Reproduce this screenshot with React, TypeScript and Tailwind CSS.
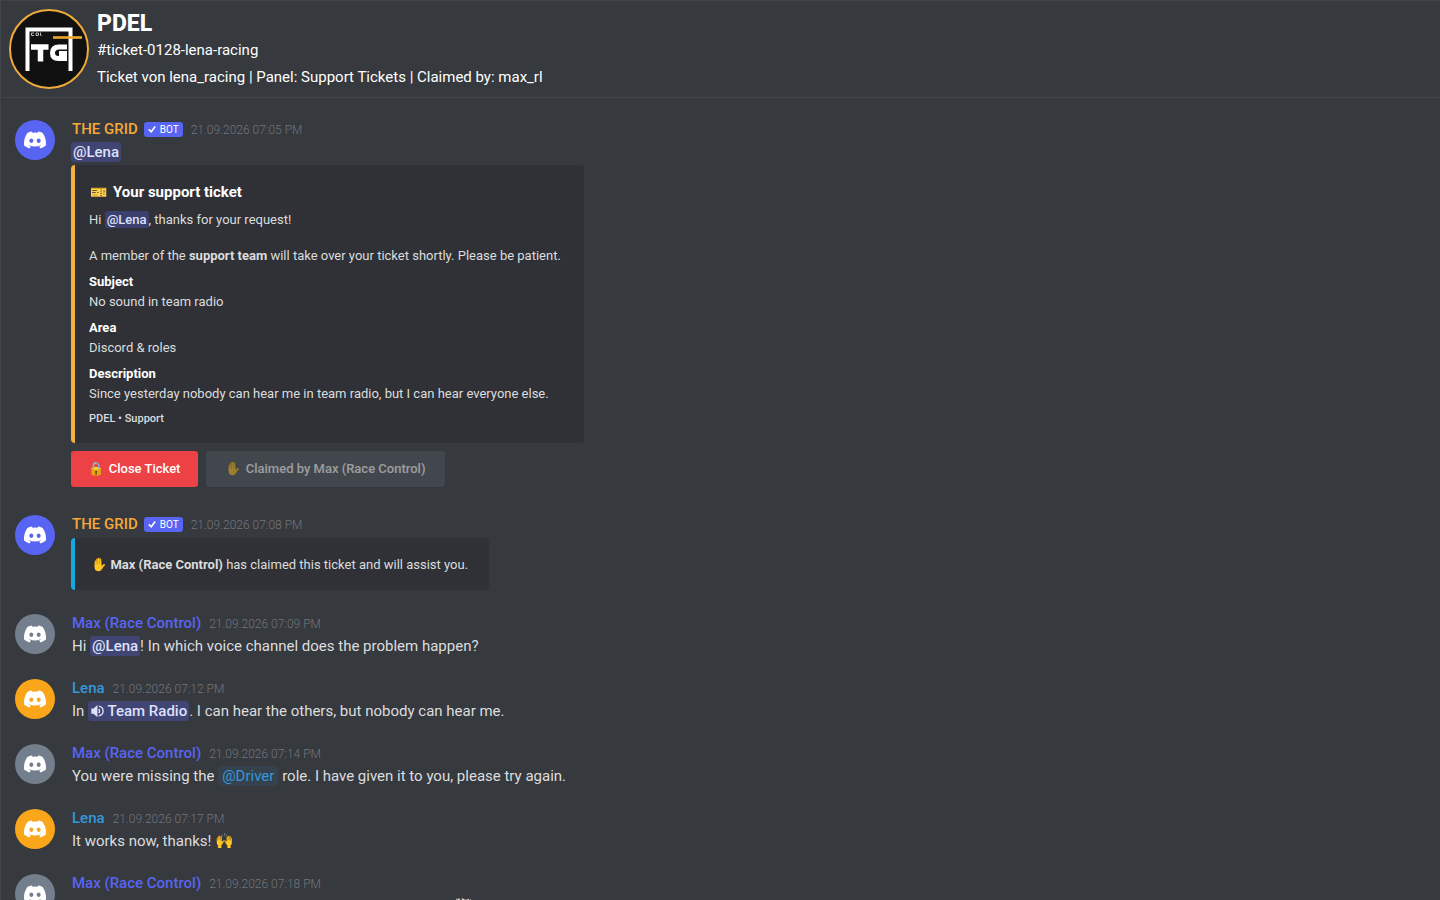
import React from "react";
import { FaDiscord } from "react-icons/fa";

type Author = {
  name: string;
  nameColor: string;
  avatarColor: string;
  bot?: boolean;
};

const grid: Author = {
  name: "THE GRID",
  nameColor: "text-[#f6a83b]",
  avatarColor: "bg-[#5865f2]",
  bot: true,
};

const max: Author = {
  name: "Max (Race Control)",
  nameColor: "text-[#5865f2]",
  avatarColor: "bg-[#747f8d]",
};

const lena: Author = {
  name: "Lena",
  nameColor: "text-[#3498db]",
  avatarColor: "bg-[#faa61a]",
};

const fields = [
  { name: "Subject", value: "No sound in team radio" },
  { name: "Area", value: "Discord & roles" },
  {
    name: "Description",
    value:
      "Since yesterday nobody can hear me in team radio, but I can hear everyone else.",
  },
];

function GuildLogo() {
  return (
    <svg viewBox="0 0 80 80" className="w-20 h-20 shrink-0" aria-label="PDEL">
      <circle cx="40" cy="40" r="39" fill="#111111" stroke="#f0ab3a" strokeWidth="2" />
      <path d="M18.5 62V20.5H61.5V62" fill="none" stroke="#fff" strokeWidth="4" />
      <path d="M44 28.5H73" stroke="#f0a92f" strokeWidth="2.6" />
      <path
        d="M25 24h-2.500v2.500h2.500M27 24h2.500v2.500H27zM31.500 23.500v3h1"
        fill="none"
        stroke="#ccc"
        strokeWidth="0.9"
      />
      {/* monogram */}
      <path d="M22 38H39.500M31.500 38V52.500" stroke="#fff" strokeWidth="5.500" fill="none" />
      <path
        d="M58 38H50Q43.500 38 43.500 44Q43.500 49.500 49.500 49.500H55.500V44.500H50"
        fill="none"
        stroke="#fff"
        strokeWidth="5"
      />
    </svg>
  );
}

function Mention({ children }: { children: React.ReactNode }) {
  return (
    <span className="bg-[#5865f2]/30 text-[#dee0fc] font-medium rounded-[3px] px-0.5 py-px">
      {children}
    </span>
  );
}

function Message({
  author,
  time,
  children,
}: {
  author: Author;
  time: string;
  children: React.ReactNode;
}) {
  return (
    <article className="flex items-start gap-4">
      <div
        className={`w-10 h-10 mt-[3px] rounded-full shrink-0 flex items-center justify-center ${author.avatarColor}`}
      >
        <FaDiscord className="w-6 h-5 text-white" />
      </div>
      <div className="min-w-0">
        <div className="flex items-center h-6 pl-px">
          <span className={`font-medium ${author.nameColor}`}>{author.name}</span>
          {author.bot && (
            <span className="flex items-center gap-1 h-[15px] ml-1.5 px-1 rounded-[3px] bg-[#5865f2] text-white text-[10px]">
              <svg viewBox="0 0 10 10" className="w-2 h-2">
                <path d="M1 5.500L4 8.500L9 2" fill="none" stroke="#fff" strokeWidth="2" />
              </svg>
              BOT
            </span>
          )}
          <time className="ml-2 pt-0.5 text-[12px] font-light text-[#72767d]">{time}</time>
        </div>
        {children}
      </div>
    </article>
  );
}

function Text({ children }: { children: React.ReactNode }) {
  return <p className="pl-px leading-[22px]">{children}</p>;
}

function App() {
  return (
    <div className="h-screen overflow-hidden bg-[#36393e] border-t border-l border-[#40444a] font-['Roboto','Noto_Color_Emoji',sans-serif] text-[15px] text-[#dcddde]">
      <header className="flex gap-2 p-2 border-b border-[#42464c] text-white">
        <GuildLogo />
        <div className="h-20 pt-px leading-[27px]">
          <h1 className="text-[23px] leading-[27px] font-extrabold">PDEL</h1>
          <p>#ticket-0128-lena-racing</p>
          <p>Ticket von lena_racing | Panel: Support Tickets | Claimed by: max_rl</p>
        </div>
      </header>

      <main className="flex flex-col gap-[19px] pt-[19px] pl-3.5 pr-4">
        <Message author={grid} time="21.09.2026 07:05 PM">
          <p className="leading-[22px]">
            <Mention>@Lena</Mention>
          </p>
          <section className="w-[513px] max-w-full mt-0.5 pt-[17px] pb-4 pl-3.5 pr-2 bg-[#2f3136] border-l-4 border-[#f5b13d] rounded-[4px] text-[13px] leading-[18px]">
            <h2 className="flex items-center gap-1 h-5 text-[15px] font-bold text-white">
              <span className="w-5 text-center text-[14px]">🎫</span>
              Your support ticket
            </h2>
            <p className="mt-[9px]">
              Hi <Mention>@Lena</Mention>, thanks for your request!
            </p>
            <p className="mt-[18px]">
              A member of the <strong>support team</strong> will take over your ticket shortly.
              Please be patient.
            </p>
            <dl>
              {fields.map((field) => (
                <div key={field.name} className="mt-2">
                  <dt className="font-bold text-white">{field.name}</dt>
                  <dd className="mt-0.5">{field.value}</dd>
                </div>
              ))}
            </dl>
            <p className="mt-2 text-[11px] leading-4 font-medium">PDEL • Support</p>
          </section>
          <div className="flex flex-wrap gap-2 pt-2 pb-1.5">
            <button
              type="button"
              className="flex items-center justify-center gap-1 h-9 w-[127px] rounded-[3px] bg-[#ed4245] text-white text-[13px] font-medium"
            >
              <span className="text-[13px]">🔒</span>
              Close Ticket
            </button>
            <button
              type="button"
              disabled
              className="flex items-center justify-center gap-1 h-9 w-[239px] rounded-[3px] bg-[#4f545c] text-white text-[13px] font-medium opacity-50"
            >
              <span className="text-[13px]">✋</span>
              Claimed by Max (Race Control)
            </button>
          </div>
        </Message>

        <Message author={grid} time="21.09.2026 07:08 PM">
          <section className="w-[418px] max-w-full mt-0.5 mb-0.5 pt-[18px] pb-4 pl-4 pr-2 bg-[#2f3136] border-l-4 border-[#17a8e0] rounded-[4px] text-[13px] leading-[18px]">
            <p>
              <span className="text-[13px] leading-none">✋</span>{" "}
              <strong>Max (Race Control)</strong> has claimed this ticket and will assist you.
            </p>
          </section>
        </Message>

        <Message author={max} time="21.09.2026 07:09 PM">
          <Text>
            Hi <Mention>@Lena</Mention>! In which voice channel does the problem happen?
          </Text>
        </Message>

        <Message author={lena} time="21.09.2026 07:12 PM">
          <Text>
            In{" "}
            <Mention>
              <svg viewBox="0 0 16 16" className="inline w-3.5 h-3.5 mb-0.5" fill="none">
                <path d="M1.500 5H4L8.500 1V15L4 11H1.500Z" fill="#dee0fc" />
                <path
                  d="M10 5.500Q12 8 10 10.500M10 2.500Q15 3.500 15 8T10 13.500"
                  stroke="#dee0fc"
                  strokeWidth="1.500"
                />
              </svg>{" "}
              Team Radio
            </Mention>
            . I can hear the others, but nobody can hear me.
          </Text>
        </Message>

        <Message author={max} time="21.09.2026 07:14 PM">
          <Text>
            You were missing the{" "}
            <span className="px-1 py-px rounded-[3px] bg-[#3498db]/10 text-[#3498db]">
              @Driver
            </span>{" "}
            role. I have given it to you, please try again.
          </Text>
        </Message>

        <Message author={lena} time="21.09.2026 07:17 PM">
          <Text>
            It works now, thanks! <span className="text-[15px] leading-none">🙌</span>
          </Text>
        </Message>

        <Message author={max} time="21.09.2026 07:18 PM">
          <Text>
            Great, I'll close the ticket then. Good luck at the next race!{" "}
            <span className="text-[15px] leading-none">🏁</span>
          </Text>
        </Message>
      </main>
    </div>
  );
}

export default App;
